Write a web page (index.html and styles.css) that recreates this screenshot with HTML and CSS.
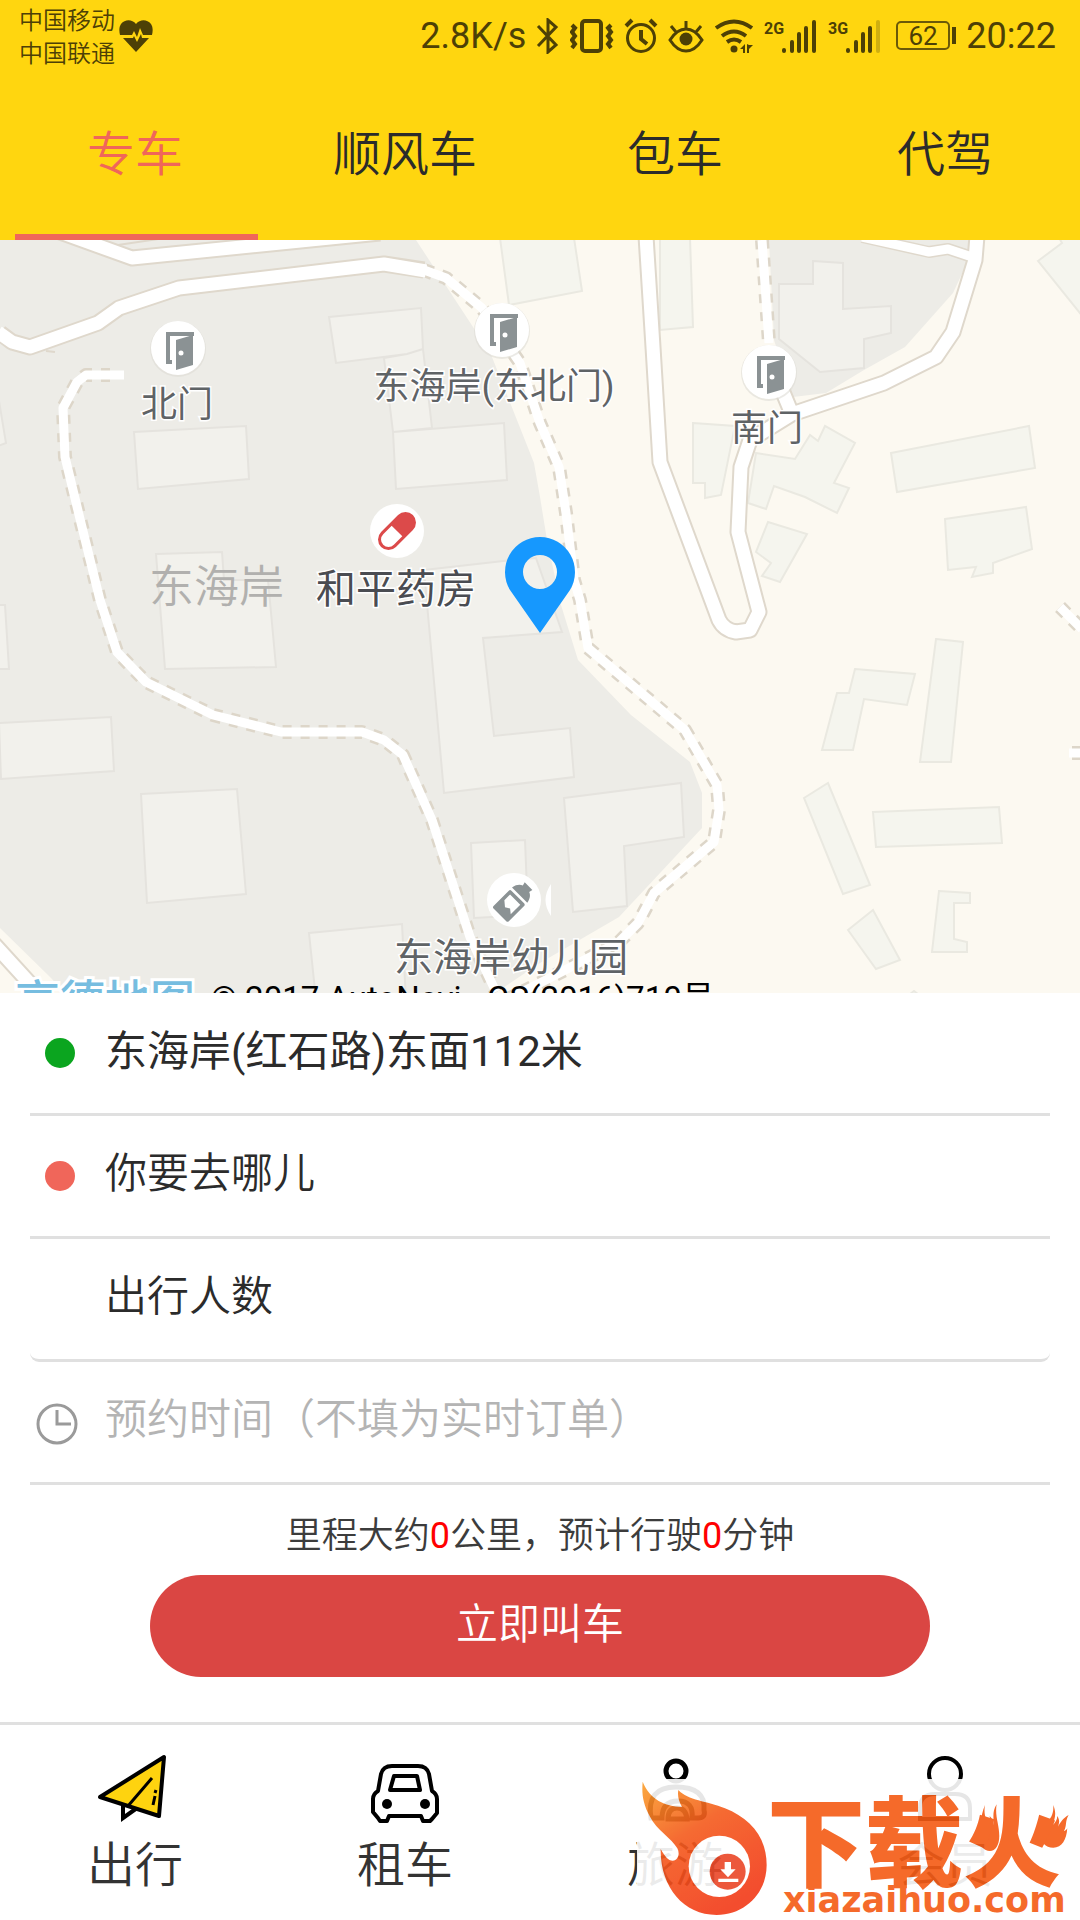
FILE: index.html
```html
<!DOCTYPE html>
<html lang="zh-CN">
<head>
<meta charset="utf-8">
<meta name="viewport" content="width=device-width, initial-scale=1">
<title>专车</title>
<link rel="stylesheet" href="styles.css">
</head>
<body>
<header class="top">
  <div class="status">
    <div class="carriers"><span>中国移动</span><span>中国联通</span></div>
    <svg class="heart" width="34" height="32" viewBox="0 0 34 32">
      <path fill="#4d4006" d="M17 4C21-1 28-1 32 4c2 3 2 7 1 11H24l-3-7-3 9-3-6-2 4H1C0 11 0 7 2 4 6-1 13-1 17 4zM4 18h10l1-2 3 6 4-8 1 4h7L17 32z"/>
    </svg>
    <div class="indicators">
      <span>2.8K/s</span>
      <svg width="24" height="36" viewBox="0 0 24 36"><path fill="none" stroke="#4d4006" stroke-width="3" d="M2 8l18 19-8 7V2l8 7L2 28"/></svg>
      <svg width="44" height="36" viewBox="0 0 44 36"><g fill="none" stroke="#4d4006"><rect x="12" y="3" width="19" height="30" rx="3" stroke-width="4"/><path stroke-width="4" d="M2 7l3 3-3 4 3 4-3 4 3 4-3 4M41 7l-3 3 3 4-3 4 3 4-3 4 3 4"/></g></svg>
      <svg width="34" height="36" viewBox="0 0 34 36"><g fill="none" stroke="#4d4006" stroke-width="3"><circle cx="17" cy="20" r="13.5"/><path stroke-width="4" d="M17 12v9l6 5M2 8l6-6M32 8l-6-6"/></g></svg>
      <svg width="36" height="36" viewBox="0 0 36 36"><g fill="none" stroke="#4d4006" stroke-width="3"><path d="M2 22Q9 11 18 11t16 11Q27 33 18 33T2 22zM18 11V3M8 14L3 8M28 14l5-6"/><circle cx="18" cy="21" r="6.500" fill="#4d4006" stroke="none"/></g></svg>
      <svg width="40" height="36" viewBox="0 0 40 36"><g fill="none" stroke="#4d4006" stroke-width="4"><path d="M2 10Q20-3 38 10M8 18q12-9 24 0M13 24q7-5 14 0"/></g><circle cx="20" cy="31" r="3.500" fill="#4d4006"/><path fill="#4d4006" d="M31 26v9h-2v-4h-3zM33 26v9h2v-4l4-4h-4z"/></svg>
      <svg width="54" height="36" viewBox="0 0 54 36"><text class="net" x="0" y="16">2G</text><path stroke="#4d4006" stroke-width="4" stroke-linecap="round" d="M20 32v1M28 24v9M35 16v17M42 10v23M50 4v29"/></svg>
      <svg width="58" height="36" viewBox="0 0 58 36"><text class="net" x="0" y="16">3G</text><path stroke="#4d4006" stroke-width="4" stroke-linecap="round" d="M20 32v1M28 24v9M35 16v17M42 10v23"/><path stroke="#cfaf10" stroke-width="4" stroke-linecap="round" d="M50 4v29"/></svg>
      <svg width="60" height="36" viewBox="0 0 60 36"><rect x="1" y="4" width="52" height="27" rx="4" fill="none" stroke="#6b5908" stroke-width="2"/><path stroke="#4d4006" stroke-width="4" d="M58 9v17"/><text class="charge" x="27" y="27" text-anchor="middle">62</text></svg>
      <span>20:22</span>
    </div>
  </div>
  <nav class="tabs">
    <a class="tab active" href="#zhuanche">专车</a>
    <a class="tab" href="#shunfengche">顺风车</a>
    <a class="tab" href="#baoche">包车</a>
    <a class="tab" href="#daijia">代驾</a>
  </nav>
</header>

<main class="main">
  <section class="map" aria-label="地图">
    <svg class="map-canvas" viewBox="0 240 1080 753" preserveAspectRatio="xMidYMid slice">
      <defs>
        <g id="door">
          <circle r="28" fill="#dddcd6" opacity=".6" cy="1"/><circle r="27" fill="#fff"/>
          <path d="M-6 14h-4V-14H14V-12" fill="none" stroke="#8b9294" stroke-width="4"/>
          <path fill="#8b9294" d="M-2-8l17-5V17L-2 22z"/><circle cx="3" cy="5" r="2.500" fill="#fff"/>
        </g>
      </defs>
      <path fill="#fcf9f1" d="M0 240h1080v760H0z"/>
      <path fill="#edece7" d="M0 240H416L473 327 492 357 513 410 534 463 540 497 547 540 561 605 578 660 631 715 690 762 702 793V828L619 917 540 963 485 1000H72L50 977 0 928zM769 240H969L967 263 953 293 905 347 864 370 826 393 793 397 774 340z"/>
      <g fill="#f2f1ec" stroke="#e5e3de" stroke-width="2">
        <path d="M329 317L421 308 423 349 407 354 336 363zM384 358L407 354 423 349 432 428 393 432zM393 432L504 423 507 480 396 489zM134 432L246 426 249 479 138 489zM-2 395L6 443-2 446zM156 554L222 552 224 580 268 580 276 667 165 669zM-2 605H5L9 669H-2zM424 570L513 560 536 558 562 632 483 638 494 736 570 728 574 777 444 793zM-1 723L111 717 114 771 1 779zM141 794L237 789 246 894 147 903zM471 843L525 840 528 915 474 918zM309 933L402 924 406 1000H316zM564 798L681 783 684 837 624 846 627 906 573 912zM813 261L843 263V309L891 306V333L864 339V368L820 372 779 339V284H813z"/>
      </g>
      <g fill="#f5f5ee" stroke="#eae9e1" stroke-width="2">
        <path d="M500 238L509 305 582 291 574 238zM660 238H690L693 327 660 330zM1038 261L1062 243 1058 236H1084V318zM693 423L735 426 721 495 705 498V483H693zM756 453L795 459 810 435 818 441 825 426 855 443 834 483 849 488 837 513 805 497 774 486 766 509 748 503zM768 522L807 534 780 582 762 576 771 563 756 552zM891 453L1029 426 1035 468 897 492zM945 519L1026 507 1032 549 993 563V573L972 577 976 567 948 570zM855 669L915 674 907 705 864 699 853 750H822L837 693H849zM936 639L963 642 951 762H920zM804 798L828 783 870 885 843 894zM873 812L999 807 1002 843 876 847zM939 891L970 893V903H954V939L967 942V952H932zM848 930L873 910 900 960 876 969zM905 998l9-7 9 7z"/>
      </g>
      <g fill="none" stroke-linejoin="round">
        <g stroke="#dfd8cc" stroke-width="17">
          <path d="M60 232L132 258 380 233M0 333L12 342 30 347 98 323 119 308 179 288 384 264 424 270M646 236L653 347 660 462 719 620Q724 630 736 632L750 630 759 612 738 532 741 467 750 440 792 414 884 383 936 357 953 332 975 260 977 236M780 385L792 414M-6 944L45 1000"/>
          <path stroke-width="2" d="M118 245L165 238M46 351L55 352"/>
          <path stroke-width="12" d="M862 237L929 252 948 249 969 256"/>
        </g>
        <path stroke="#ddd6c9" stroke-width="14" stroke-dasharray="9 9" d="M424 270L446 278 482 308 520 363 540 423 559 467 566 513 574 580 580 600 588 648 685 730 717 785 719 810 714 842 654 893 638 923 619 942 540 983 500 1003M110 375H86L77 382 63 408 65 457 81 523 100 600 117 652 146 682 213 715 281 732H362L384 740 403 755 432 820 470 937 496 992M762 240L769 343M1060 607L1082 629M1072 753h10"/>
        <path stroke="#fff" stroke-width="9" d="M424 270L446 278 482 308 520 363 540 423 559 467 566 513 574 580 580 600 588 648 685 730 717 785 719 810 714 842 654 893 638 923 619 942 540 983 500 1003M124 375H86L77 382 63 408 65 457 81 523 100 600 117 652 146 682 213 715 281 732H362L384 740 403 755 432 820 470 937 496 992M762 240L769 343M862 237L929 252 948 249 972 257M1060 607L1082 629M1069 753h13"/>
        <path stroke="#fff" stroke-width="13" d="M60 232L132 258 380 233M-2 332L12 342 30 347 98 323 119 308 179 288 384 264 426 271M646 236L653 347 660 462 719 620Q724 630 736 632L750 630 759 612 738 532 741 467 750 440 792 414 884 383 936 357 953 332 975 260 977 236M780 385L792 414M-6 944L45 1000"/>
      </g>
      <use href="#door" x="178" y="348"/>
      <use href="#door" x="502" y="330"/>
      <use href="#door" x="769" y="372"/>
      <circle cx="397" cy="531" r="27" fill="#fff"/>
      <g transform="translate(397 531) rotate(45)"><rect x="-9" y="-21" width="18" height="42" rx="9" fill="#fff" stroke="#dc4a4a" stroke-width="3"/><path fill="#dc4a4a" d="M-9 0v-12a9 9 0 0 1 18 0V0z"/></g>
      <circle cx="514" cy="900" r="27" fill="#fff"/>
      <path fill="#fff" d="M551 884q-11 16 0 32z"/>
      <g transform="translate(512 904) rotate(45) scale(.9)"><rect x="-13" y="-10" width="24" height="28" rx="2" fill="#8b9294"/><path fill="#8b9294" d="M-13-13h24c-1-6-4-9-7-10l1-4H-7l1 4c-3 1-6 4-7 10z"/><path fill="#fff" d="M-9-6H7V9L2 5-3 8-9 3z"/></g>
      <g class="label">
        <text x="177" y="417" text-anchor="middle">北门</text>
        <text x="494" y="399" text-anchor="middle">东海岸(东北门)</text>
        <text x="767" y="441" text-anchor="middle">南门</text>
        <text class="area" x="149" y="603">东海岸</text>
        <text class="shop" x="316" y="603">和平药房</text>
        <text class="place" x="394" y="971">东海岸幼儿园</text>
      </g>
      <path fill="#1698fe" fill-rule="evenodd" d="M540 537a35 35 0 0 1 30 53L540 633 510 590a35 35 0 0 1 30-53zM540 555a17 17 0 1 0 0 34 17 17 0 0 0 0-34z"/>
      <text class="brand" x="15" y="1018">高德地图</text>
      <text class="copyright" x="211" y="1010">© 2017 AutoNavi - GS(2016)710号</text>
    </svg>
  </section>

  <form class="order" action="#">
    <div class="rows">
      <div class="row">
        <span class="mark"><i class="dot start"></i></span>
        <input class="field" type="text" aria-label="出发地" value="东海岸(红石路)东面112米">
      </div>
      <div class="row">
        <span class="mark"><i class="dot end"></i></span>
        <input class="field dark" type="text" aria-label="目的地" placeholder="你要去哪儿">
      </div>
      <div class="row rounded">
        <span class="mark"></span>
        <select class="field" aria-label="出行人数"><option>出行人数</option></select>
      </div>
      <div class="row">
        <span class="mark time"><svg width="42" height="42" viewBox="0 0 42 42"><g fill="none" stroke="#9a9a9a" stroke-width="3"><circle cx="21" cy="21" r="19"/><path d="M21 7v14h14"/></g></svg></span>
        <input class="field" type="text" aria-label="预约时间" placeholder="预约时间（不填为实时订单）">
      </div>
    </div>
    <p class="estimate">里程大约<b>0</b>公里，预计行驶<b>0</b>分钟</p>
    <button class="call" type="submit">立即叫车</button>
  </form>
</main>

<nav class="bottom">
  <a class="item" href="#trip">
    <svg width="80" height="72" viewBox="94 1751 80 72"><path fill="#fff" stroke="#000" stroke-width="4" d="M122 1802V1817L136 1807"/><path fill="#fed30f" stroke="#000" stroke-width="4" stroke-linejoin="round" d="M99 1796L163 1756 158 1815z"/><path fill="none" stroke="#000" stroke-width="3" d="M151 1777L127 1805M155 1789l-1 3M154 1795l-2 9"/></svg>
    <span>出行</span>
  </a>
  <a class="item" href="#rent">
    <svg width="80" height="72" viewBox="365 1752 80 72"><g fill="none" stroke="#000" stroke-width="4" stroke-linejoin="round"><path d="M392 1766H418Q427 1766 429 1774L432 1791Q437 1794 437 1799V1813L432 1819 430 1821H423L421 1816H389L387 1821H380L378 1818 373 1812V1799Q373 1794 378 1791L381 1774Q383 1766 392 1766z"/><path d="M394 1776H417L420 1790H390z"/></g><circle cx="387" cy="1804" r="5"/><circle cx="425" cy="1804" r="5"/></svg>
    <span>租车</span>
  </a>
  <a class="item" href="#travel">
    <svg width="80" height="72" viewBox="635 1752 80 72"><g fill="none" stroke="#000" stroke-width="5"><circle cx="676" cy="1771" r="10"/><path d="M651 1818Q646 1787 676 1787T704 1810Q706 1818 698 1818H692Q694 1801 678 1801T662 1818zM668 1819Q668 1808 677 1808T687 1819z"/></g></svg>
    <span>旅游</span>
  </a>
  <a class="item" href="#member">
    <svg width="80" height="72" viewBox="905 1752 80 72"><g fill="none" stroke="#000" stroke-width="4"><circle cx="945" cy="1774" r="16"/><path d="M920 1819V1808Q920 1794 935 1794H955Q970 1794 970 1808V1819z"/></g></svg>
    <span>会员</span>
  </a>
</nav>

<aside class="stamp">
  <svg width="443" height="141" viewBox="637 1779 443 141">
    <defs><linearGradient id="fire" x1="0" y1="0" x2=".6" y2="1"><stop offset="0" stop-color="#fba02c"/><stop offset=".45" stop-color="#f45a1c"/><stop offset="1" stop-color="#f23a18"/></linearGradient></defs>
    <g transform="translate(600 1700) scale(.3333)">
      <path fill="url(#fire)" d="M128 245C150 300 195 318 246 321 236 303 232 288 235 270 265 302 320 302 375 325 450 355 500 410 500 495 500 580 435 645 350 645 250 645 180 560 182 447 195 470 205 482 218 482 236 480 240 460 232 445 215 415 170 390 150 350 128 310 125 280 128 245z"/>
      <circle cx="358" cy="499" r="92" fill="#fff"/>
      <circle cx="383" cy="515" r="54" fill="#ea4727"/>
      <path fill="#fff" d="M374 486h19v22h14l-23 24-23-24h13zM355 536h60v10h-60z"/>
      <path fill="#f45a14" d="M1155 315c-5 30 5 45 10 60 5-10 6-18 4-27 9 9 12 19 10 30 5-22-5-40 11-65-6 35 8 60 8 95 0 28-12 45-28 45-20 0-32-18-30-40 2-35 0-60 15-98zM1360 315c10 25 5 40-2 60 8-6 14-16 14-27 8 12 6 22 2 32 8-14 14-24 32-35-12 22-4 30-14 48 4 0 8-4 10-8-2 34-16 58-42 58-24 0-38-18-38-36 0-38 42-40 38-92z"/>
    </g>
    <text class="stamp-name" x="767" y="1879">下载火</text>
    <text class="stamp-site" x="783" y="1912">xiazaihuo.com</text>
  </svg>
</aside>
</body>
</html>
```
FILE: styles.css
```css
* { box-sizing: border-box; }

body {
  margin: 0;
  min-height: 100vh;
  position: relative;
  display: flex;
  flex-direction: column;
  background: #fff;
  color: #2b2b2b;
  font-family: Roboto, "Noto Sans CJK SC", sans-serif;
  font-size: 42px;
  font-weight: 350;
}

a { color: inherit; text-decoration: none; }
svg { display: block; }

.top { background: #ffd60f; }

.status {
  display: flex;
  align-items: center;
  height: 72px;
  padding: 0 24px 0 19px;
  color: #4d4006;
}

.carriers {
  display: flex;
  flex-direction: column;
  padding-top: 4px;
  font-size: 24px;
  line-height: 33px;
}

.heart { margin-left: 4px; }

.indicators {
  flex: 1;
  display: flex;
  align-items: center;
  justify-content: flex-end;
  gap: 10px;
  font-size: 36px;
  font-weight: 400;
}

.net { font-size: 16px; font-weight: 700; fill: #4d4006; }
.charge { font-size: 26px; fill: #4d4006; }

.tabs { display: flex; height: 168px; }

.tab {
  position: relative;
  flex: 1;
  display: flex;
  align-items: center;
  justify-content: center;
  padding-bottom: 12px;
  font-size: 48px;
}

.tab.active { color: #f0665a; }

.tab.active::after {
  content: "";
  position: absolute;
  left: 15px;
  right: 12px;
  bottom: 0;
  height: 6px;
  background: #f0665a;
}

.main { flex: 1; display: flex; flex-direction: column; }

.map {
  flex: 1 0 300px;
  display: grid;
  min-height: 0;
  overflow: hidden;
  contain: size;
}

.map-canvas { width: 100%; height: 100%; }

.label {
  font-size: 36px;
  font-weight: 400;
  fill: #5f6366;
  stroke: #fff;
  stroke-width: 3px;
  paint-order: stroke;
}

.label .area { font-size: 45px; font-weight: 350; fill: #b1b0ae; stroke: none; }
.label .shop { font-size: 40px; fill: #4a4c52; }
.label .place { font-size: 39px; }

.brand {
  font-size: 45px;
  font-weight: 500;
  fill: #76bde0;
  stroke: #fff;
  stroke-width: 6px;
  paint-order: stroke;
}

.copyright { font-size: 33px; font-weight: 400; fill: #000; }

.order {
  display: flex;
  flex-direction: column;
  align-items: center;
  padding-bottom: 45px;
}

.rows { align-self: stretch; padding: 0 30px; }

.row {
  display: flex;
  align-items: center;
  height: 123px;
  border-bottom: 3px solid #e0e0e0;
}

.row.rounded { border-radius: 9px; }

.mark { width: 75px; padding-left: 15px; }
.mark.time { padding: 4px 0 0 6px; }

.dot {
  display: block;
  width: 30px;
  height: 30px;
  border-radius: 50%;
}

.start { background: #0ba51f; }
.end { background: #f0665a; }

.field {
  flex: 1;
  min-width: 0;
  height: 120px;
  margin: 0;
  padding: 0 0 6px;
  border: 0;
  outline: 0;
  background: none;
  appearance: none;
  color: #2b2b2b;
  font: inherit;
}

.field[value] { padding-bottom: 12px; font-weight: 400; }
.field::placeholder { color: #b4b4b4; opacity: 1; }
.field.dark::placeholder { color: #2b2b2b; }

.estimate {
  margin: 24px 0 12px;
  color: #3c3c3c;
  font-size: 36px;
  line-height: 54px;
}

.estimate b { color: #f00; font-weight: 400; }

.call {
  width: calc(100% - 300px);
  height: 102px;
  padding: 0 0 12px;
  border: 0;
  border-radius: 51px;
  background: #da4643;
  color: #fff;
  font: inherit;
}

.bottom {
  display: flex;
  border-top: 3px solid #e0e0e0;
  padding: 27px 0 24px;
  color: #333;
  font-size: 48px;
}

.item {
  flex: 1;
  display: flex;
  flex-direction: column;
  align-items: center;
  gap: 12px;
  line-height: 60px;
}

.stamp {
  position: absolute;
  right: 0;
  bottom: 0;
  background: #fff;
  opacity: .9;
}

.stamp-name { font-size: 98px; font-weight: 900; fill: #f45a14; }

.stamp-site {
  font-family: "DejaVu Sans", sans-serif;
  font-size: 35px;
  font-weight: 700;
  fill: #f45a14;
}
```
